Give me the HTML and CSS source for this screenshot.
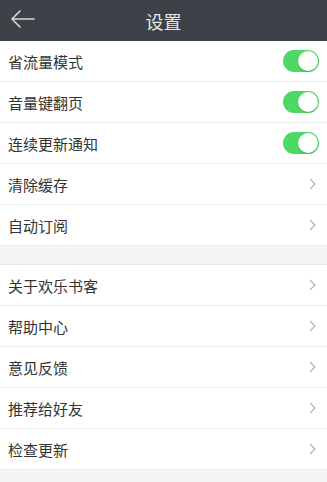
FILE: index.html
```html
<!DOCTYPE html>
<html lang="zh">
<head>
<meta charset="utf-8">
<title>设置</title>
<link rel="stylesheet" href="styles.css">
</head>
<body>
<header class="topbar">
  <span class="back">
    <svg width="26" height="20" viewBox="0 0 26 20"><path d="M24 10H2M10 2L2 10l8 8" fill="none" stroke="#d8d8d8" stroke-width="1.6" stroke-linecap="round" stroke-linejoin="round"/></svg>
  </span>
  <h1 class="title">设置</h1>
</header>
<ul class="group">
  <li class="row"><span class="label">省流量模式</span><span class="toggle"><span class="knob"></span></span></li>
  <li class="row"><span class="label">音量键翻页</span><span class="toggle"><span class="knob"></span></span></li>
  <li class="row"><span class="label">连续更新通知</span><span class="toggle"><span class="knob"></span></span></li>
  <li class="row"><span class="label">清除缓存</span><span class="chev"><svg width="7" height="12" viewBox="0 0 7 12"><path d="M1 1l5 5-5 5" fill="none" stroke="#b0b0b0" stroke-width="1.1"/></svg></span></li>
  <li class="row"><span class="label">自动订阅</span><span class="chev"><svg width="7" height="12" viewBox="0 0 7 12"><path d="M1 1l5 5-5 5" fill="none" stroke="#b0b0b0" stroke-width="1.1"/></svg></span></li>
</ul>
<ul class="group">
  <li class="row"><span class="label">关于欢乐书客</span><span class="chev"><svg width="7" height="12" viewBox="0 0 7 12"><path d="M1 1l5 5-5 5" fill="none" stroke="#b0b0b0" stroke-width="1.1"/></svg></span></li>
  <li class="row"><span class="label">帮助中心</span><span class="chev"><svg width="7" height="12" viewBox="0 0 7 12"><path d="M1 1l5 5-5 5" fill="none" stroke="#b0b0b0" stroke-width="1.1"/></svg></span></li>
  <li class="row"><span class="label">意见反馈</span><span class="chev"><svg width="7" height="12" viewBox="0 0 7 12"><path d="M1 1l5 5-5 5" fill="none" stroke="#b0b0b0" stroke-width="1.1"/></svg></span></li>
  <li class="row"><span class="label">推荐给好友</span><span class="chev"><svg width="7" height="12" viewBox="0 0 7 12"><path d="M1 1l5 5-5 5" fill="none" stroke="#b0b0b0" stroke-width="1.1"/></svg></span></li>
  <li class="row"><span class="label">检查更新</span><span class="chev"><svg width="7" height="12" viewBox="0 0 7 12"><path d="M1 1l5 5-5 5" fill="none" stroke="#b0b0b0" stroke-width="1.1"/></svg></span></li>
</ul>
</body>
</html>
```
FILE: styles.css
```css
html, body {
  margin: 0;
  padding: 0;
  background: #f5f5f5;
  font-family: "Noto Sans CJK SC", "Noto Sans", sans-serif;
}
.topbar {
  height: 41px;
  background: #3d4249;
  display: flex;
  align-items: center;
  justify-content: center;
  position: relative;
}
.back {
  position: absolute;
  left: 10px;
  top: 9px;
  display: flex;
}
.title {
  margin: 0;
  font-size: 18px;
  font-weight: normal;
  color: #e6e6e6;
  line-height: 1;
}
.group {
  list-style: none;
  margin: 0 0 18px 0;
  padding: 0;
  background: #fff;
  border-top: 1px solid #e8e8e8;
}
.group:first-of-type {
  border-top: none;
}
.row {
  height: 40px;
  border-bottom: 1px solid #ececec;
  display: flex;
  align-items: center;
  justify-content: space-between;
  padding: 0 8px 0 8px;
}
.label {
  font-size: 15px;
  color: #333;
}
.toggle {
  width: 36px;
  height: 22px;
  border-radius: 11px;
  background: #4cd964;
  display: flex;
  align-items: center;
  justify-content: flex-end;
  padding-right: 1px;
  box-sizing: border-box;
}
.knob {
  width: 20px;
  height: 20px;
  border-radius: 50%;
  background: #fff;
  box-shadow: 0 1px 2px rgba(0,0,0,0.2);
}
.chev {
  display: flex;
  margin-right: 3px;
}
```
